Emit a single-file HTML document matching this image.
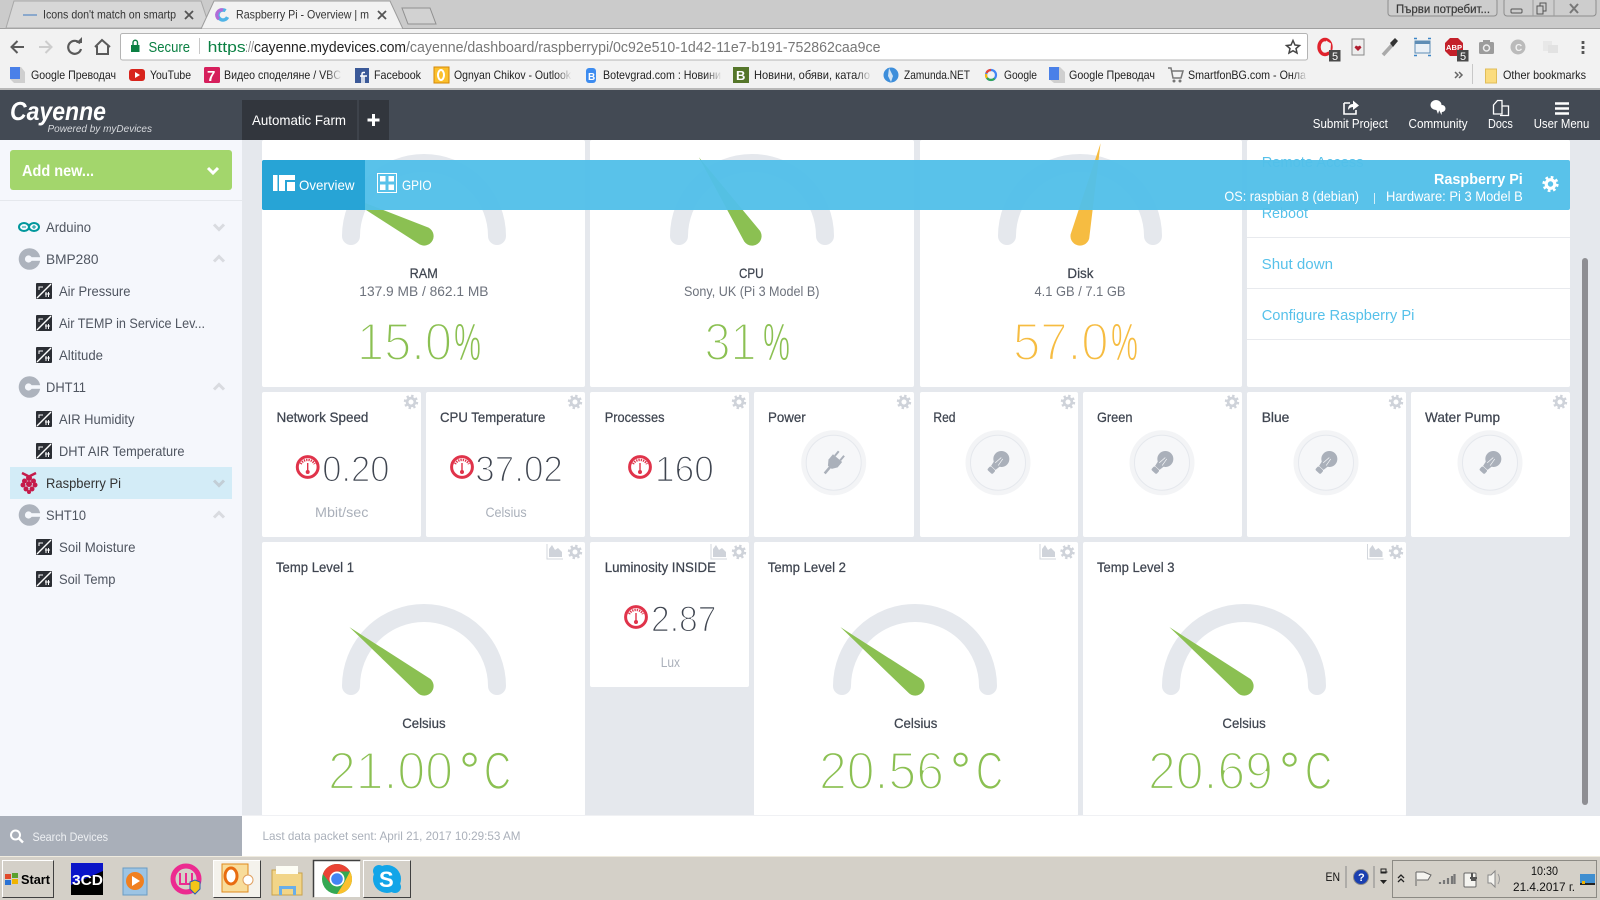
<!DOCTYPE html>
<html lang="en"><head><meta charset="utf-8"><title>Raspberry Pi - Overview | myDevices Cayenne</title>
<style>
html,body{margin:0;padding:0;width:1600px;height:900px;overflow:hidden;background:#e5e8ed}
svg{display:block;font-family:"Liberation Sans",sans-serif}
text{white-space:pre}
.t{font-size:12px;fill:#333}
.b{font-size:12px;fill:#222}
.s{font-size:14px;fill:#4f5560}
.ti{font-size:14px;fill:#3f4550;stroke:#3f4550;stroke-width:.25}
.sub{font-size:14px;fill:#6d727c}
.big{font-size:53px;stroke:#fff;stroke-width:2.2}
.pc{font-size:53px;stroke:#fff;stroke-width:.9}
.deg{font-size:53px;stroke:#fff;stroke-width:.6}
.cc{font-size:53px;stroke:#fff;stroke-width:1.7}
.mid{font-size:36px;fill:#3f4550;stroke:#fff;stroke-width:1.5}
.un{font-size:14px;fill:#aab0ba}
.lnk{font-size:15px;fill:#56c1ea}
.h{font-size:12.5px;fill:#fff}
.w{fill:#fff}
.tb{font-size:12px;fill:#111}
</style></head><body>
<svg width="1600" height="900" viewBox="0 0 1600 900" xmlns="http://www.w3.org/2000/svg">
<defs>
<linearGradient id="fade" x1="0" x2="1" y1="0" y2="0"><stop offset="0" stop-color="#f2f2f2" stop-opacity="0"/><stop offset="1" stop-color="#f2f2f2"/></linearGradient>
<g id="c"><circle r="10.8" fill="#adb3bd"/><circle cx="-1" r="3.6" fill="#f5f7fc"/><rect x="-1" y="-1.800" width="12.500" height="3.600" fill="#f5f7fc"/></g>
<g id="ch"><rect width="16" height="16" rx="1" fill="#2b2e34"/><path d="M1 15L15 1" stroke="#fff" stroke-width="1.4"/><path d="M3 7V4H7M9 11L14 11M10 9L10 14M12.5 9L12.5 14" stroke="#fff" stroke-width="1" fill="none"/></g>
<path id="dn" d="M-5-2.5L0 2.5 5-2.5" fill="none" stroke="#d9dbe0" stroke-width="3"/>
<path id="up" d="M-5 2.5L0-2.5 5 2.5" fill="none" stroke="#d9dbe0" stroke-width="3"/>
<g id="gear"><circle r="3.9" fill="none" stroke="#cfd3da" stroke-width="2.8"/><circle r="5.9" fill="none" stroke="#cfd3da" stroke-width="2.6" stroke-dasharray="2.3 2.33"/></g>
<g id="area"><path d="M-8-8V7H8" fill="none" stroke="#d3d7dd" stroke-width="1"/><path d="M-6 5V-3L-3-7 0-2 3-4 7 0V5Z" fill="#cfd3da"/></g>
<g id="arc"><path d="M-73 0A73 73 0 0 1 73 0" fill="none" stroke="#e5e8ed" stroke-width="18" stroke-linecap="round"/></g>
<path id="nd" d="M0-95L9.3-1.8A9.5 9.5 0 1 1-9.3-1.8Z"/>
<g id="m"><circle r="10.4" fill="#fff" stroke="#e0334a" stroke-width="3"/><path d="M-7-3A8 8 0 0 1 7-3" fill="none" stroke="#e0334a" stroke-width="2.4" stroke-dasharray="1.3 1"/><path d="M0-4V4" stroke="#e0334a" stroke-width="1.4"/><circle cy="5" r="2" fill="#e0334a"/></g>
<g id="tg"><circle r="32.5" fill="#f3f4f6"/><circle r="27.5" fill="#f6f7f9" stroke="#e5e8ed" stroke-width="1"/></g>
<g id="bulb"><g transform="rotate(42)"><circle cy="-5" r="8" fill="#aab0ba"/><path d="M-4 1H4L3 7H-3Z" fill="#aab0ba"/><rect x="-3.5" y="7.5" width="7" height="5" rx="1.5" fill="#aab0ba"/><path d="M-2 2L-1-6M2 2L1-6" stroke="#f6f7f9" stroke-width=".7"/></g></g>
</defs>

<!-- Browser tab strip -->
<g id="browser-tabs">
<rect width="1600" height="29" fill="#cbcbcb"/>
<rect y="28" width="1600" height="1" fill="#a0a0a0"/>
<path d="M6 28L14 1H201L210 28Z" fill="#d7d7d7" stroke="#a8a8a8"/>
<path d="M201 29L214 1H390L403 29Z" fill="#f2f2f2" stroke="#9c9c9c"/>
<rect x="23" y="14" width="14" height="2" fill="#8aa8cc"/>
<text x="43" y="18.500" class="t" textLength="133" lengthAdjust="spacingAndGlyphs">Icons don't match on smartp</text>
<path d="M185 11L193 19M193 11L185 19" stroke="#555" stroke-width="1.8"/>
<circle cx="223" cy="15" r="5" fill="none" stroke="#50b4e6" stroke-width="3.4" stroke-dasharray="24 7.4" transform="rotate(25 223 15)"/>
<path d="M223 10A5 5 0 0 0 219 19" fill="none" stroke="#b06cd8" stroke-width="3.4"/>
<text x="236" y="18.500" class="t" textLength="133" lengthAdjust="spacingAndGlyphs">Raspberry Pi - Overview | m</text>
<path d="M378 11L386 19M386 11L378 19" stroke="#555" stroke-width="1.8"/>
<path d="M402 8H430L436 24H408Z" fill="#d2d2d2" stroke="#909090"/>
<rect x="1388" y="-2" width="109" height="18" rx="3" fill="#cdcdcd" stroke="#8d8d8d"/>
<text x="1396" y="13" class="t" style="stroke:#555;stroke-width:.3" textLength="94" lengthAdjust="spacingAndGlyphs">Първи потребит...</text>
<rect x="1504" y="-2" width="92" height="18" rx="3" fill="#cdcdcd" stroke="#8d8d8d"/>
<path d="M1533-2V16M1554-2V16" stroke="#9a9a9a"/>
<rect x="1511" y="9" width="11" height="4" rx="1" fill="none" stroke="#555"/>
<path d="M1537 6H1543V14H1537ZM1540 6V3H1546V11H1543" fill="none" stroke="#555"/>
<path d="M1570 4L1578 13M1578 4L1570 13" stroke="#777" stroke-width="2"/>
</g>

<!-- Toolbar -->
<g id="toolbar">
<rect y="29" width="1600" height="59" fill="#f2f2f2"/>
<rect y="88" width="1600" height="2" fill="#b8b8b8"/>
<path d="M24 47H12M17.5 41L11.5 47 17.5 53" fill="none" stroke="#5a5a5a" stroke-width="2"/>
<path d="M39 47H51M45.500 41L51.500 47 45.500 53" fill="none" stroke="#cdcdcd" stroke-width="2"/>
<path d="M80 43.500A6.500 6.500 0 1 0 81 49" fill="none" stroke="#5a5a5a" stroke-width="2.200"/><path d="M76 43H82V37Z" fill="#5a5a5a"/>
<path d="M95 47L102 40 110 47M97 46V54H108V46" fill="none" stroke="#5a5a5a" stroke-width="2"/>
<rect x="120.500" y="33.500" width="1187" height="26.500" rx="2" fill="#fff" stroke="#b4b4b4"/>
<rect x="131" y="45" width="8.500" height="7" fill="#0b8043"/><path d="M133 45V42.500A2.200 2.200 0 0 1 137.500 42.500V45" fill="none" stroke="#0b8043" stroke-width="1.400"/>
<text x="148.500" y="52" style="font-size:14.500px;fill:#0b8043" textLength="41.500" lengthAdjust="spacingAndGlyphs">Secure</text>
<rect x="199" y="38" width="1" height="16" fill="#c8c8c8"/>
<text x="207.700" y="52" style="font-size:14.500px;fill:#0b8043" textLength="38" lengthAdjust="spacingAndGlyphs">https</text>
<text x="245" y="52" style="font-size:14.500px;fill:#888" textLength="9" lengthAdjust="spacingAndGlyphs">://</text>
<text x="254" y="52" style="font-size:14.500px;fill:#222" textLength="152" lengthAdjust="spacingAndGlyphs">cayenne.mydevices.com</text>
<text x="406" y="52" style="font-size:14.500px;fill:#777" textLength="474.500" lengthAdjust="spacingAndGlyphs">/cayenne/dashboard/raspberrypi/0c92e510-1d42-11e7-b191-752862caa9ce</text>
<path d="M1293 40.500L1295 45 1299.500 45.500 1296 48.500 1297 53 1293 50.700 1289 53 1290 48.500 1286.500 45.500 1291 45Z" fill="none" stroke="#444" stroke-width="1.500"/>

<!-- Extensions -->
<ellipse cx="1325" cy="47" rx="6" ry="7.500" fill="none" stroke="#e0222c" stroke-width="3.400"/><path d="M1326 40.500L1331 43.500 1330.500 51 1327 52Z" fill="#f2f2f2"/>
<rect x="1329" y="50" width="11.500" height="11.500" fill="#4a4a4a"/><text x="1332" y="60" style="font-size:11px;fill:#fff">5</text>
<rect x="1352" y="39" width="12" height="16" fill="#eee" stroke="#8a8a8a"/><path d="M1358 51L1354.500 47.500 1356 45.500 1358 46.500 1360 45.500 1361.500 47.500Z" fill="#b01c2e"/>
<path d="M1383 55L1393 44" stroke="#aaa" stroke-width="3.600"/><path d="M1390 43L1395 38 1398 41 1393 47Z" fill="#333"/>
<rect x="1415" y="41" width="15" height="12" fill="#eaf0f6" stroke="#5e8db5"/><rect x="1415" y="41" width="15" height="3" fill="#5e8db5"/>
<path d="M1414 38.500H1417M1428 38.500H1431M1414 55.500H1417M1428 55.500H1431" stroke="#3d85c6" stroke-width="1.500"/>
<path d="M1450 38H1458L1463 43V51L1458 56H1450L1445 51V43Z" fill="#c4202a"/><text x="1446" y="50" style="font-size:7.500px;fill:#fff;font-weight:bold" textLength="16" lengthAdjust="spacingAndGlyphs">ABP</text>
<rect x="1457" y="50" width="11.500" height="11.500" fill="#4a4a4a"/><text x="1460" y="60" style="font-size:11px;fill:#fff">5</text>
<rect x="1479" y="42" width="15" height="12" rx="1.500" fill="#9c9c9c"/><rect x="1483" y="40" width="7" height="3" fill="#9c9c9c"/><circle cx="1486.500" cy="48" r="3" fill="none" stroke="#eee" stroke-width="1.500"/>
<circle cx="1518" cy="47" r="7.500" fill="#bbb"/><text x="1515" y="51" style="font-size:10px;fill:#f2f2f2;font-weight:bold">C</text>
<rect x="1543" y="41" width="9" height="10" fill="#e8e8e8"/><rect x="1548" y="45" width="10" height="8" fill="#e2e2e2"/>
<path d="M1583 41v3M1583 46v3M1583 51v3" stroke="#555" stroke-width="2.800"/>

<!-- Bookmarks -->
<path d="M10 67H21L25 72V83H14L10 79Z" fill="#cfcfcf"/><rect x="10" y="67" width="10" height="12" fill="#4a80e8"/>
<text x="31" y="79" class="b" textLength="85" lengthAdjust="spacingAndGlyphs">Google Преводач</text>
<rect x="129" y="69" width="16" height="12" rx="3" fill="#d8241c"/><path d="M135 72V78L140 75Z" fill="#fff"/>
<text x="150" y="79" class="b" textLength="41" lengthAdjust="spacingAndGlyphs">YouTube</text>
<rect x="204" y="67" width="16" height="16" rx="1.500" fill="#d61f5c"/><text x="207" y="81" style="font-size:15px;font-weight:bold;fill:#fff">7</text>
<text x="224" y="79" class="b" textLength="117" lengthAdjust="spacingAndGlyphs">Видео споделяне / VBC</text>
<rect x="355" y="68" width="14" height="15" fill="#3b5998"/><path d="M364 83V76H367M365 72.500H363.500Q362 72.500 362 74V83M360 76H364" fill="none" stroke="#fff" stroke-width="1.500"/>
<text x="374" y="79" class="b" textLength="47" lengthAdjust="spacingAndGlyphs">Facebook</text>
<rect x="434" y="67" width="15" height="16" fill="#fbc02d" stroke="#d48806"/><ellipse cx="441" cy="75" rx="3" ry="5" fill="none" stroke="#fff" stroke-width="2"/>
<text x="454" y="79" class="b" textLength="117" lengthAdjust="spacingAndGlyphs">Ognyan Chikov - Outlook</text>
<rect x="586" y="68" width="10" height="15" rx="3" fill="#3d8cf0"/><text x="588" y="80" style="font-size:10px;fill:#fff;font-weight:bold">B</text>
<text x="603" y="79" class="b" textLength="118" lengthAdjust="spacingAndGlyphs">Botevgrad.com : Новини</text>
<rect x="733" y="67" width="16" height="16" fill="#55762a"/><text x="736" y="80" style="font-size:13px;fill:#fff;font-weight:bold">B</text>
<text x="754" y="79" class="b" textLength="116" lengthAdjust="spacingAndGlyphs">Новини, обяви, катало</text>
<circle cx="891" cy="75" r="7.500" fill="#3d8edb"/><path d="M889 68L893 76 891 82 888 76Z" fill="#cfe3f5"/>
<text x="904" y="79" class="b" textLength="66" lengthAdjust="spacingAndGlyphs">Zamunda.NET</text>
<circle cx="991" cy="75" r="5" fill="none" stroke="#4285f4" stroke-width="2.200"/><path d="M991 70A5 5 0 0 0 986.500 73" fill="none" stroke="#ea4335" stroke-width="2.200"/><path d="M986.200 74A5 5 0 0 0 987 78" fill="none" stroke="#fbbc05" stroke-width="2.200"/><path d="M987 78A5 5 0 0 0 994.500 78.500" fill="none" stroke="#34a853" stroke-width="2.200"/>
<text x="1004" y="79" class="b" textLength="33" lengthAdjust="spacingAndGlyphs">Google</text>
<path d="M1049 67H1060L1065 72V83H1054L1049 79Z" fill="#cfcfcf"/><rect x="1049" y="67" width="10" height="13" fill="#4a80e8"/>
<text x="1069" y="79" class="b" textLength="86" lengthAdjust="spacingAndGlyphs">Google Преводач</text>
<path d="M1168 68H1171L1173 78H1181L1183 71H1172" fill="none" stroke="#777" stroke-width="1.500"/><circle cx="1174" cy="81" r="1.500" fill="#777"/><circle cx="1180" cy="81" r="1.500" fill="#777"/>
<text x="1188" y="79" class="b" textLength="118" lengthAdjust="spacingAndGlyphs">SmartfonBG.com - Онла</text>
<rect x="326" y="63" width="16" height="22" fill="url(#fade)"/><rect x="556" y="63" width="16" height="22" fill="url(#fade)"/><rect x="706" y="63" width="16" height="22" fill="url(#fade)"/><rect x="856" y="63" width="16" height="22" fill="url(#fade)"/><rect x="1292" y="63" width="16" height="22" fill="url(#fade)"/>
<path d="M1455 72L1458 75 1455 78M1459 72L1462 75 1459 78" fill="none" stroke="#666" stroke-width="1.500"/>
<rect x="1472" y="64" width="1" height="20" fill="#c8c8c8"/>
<rect x="1485.500" y="69" width="11" height="14" fill="#fbdc7e" stroke="#e0bd5a"/>
<text x="1503" y="79" class="b" textLength="83" lengthAdjust="spacingAndGlyphs">Other bookmarks</text>
</g>

<!-- App background -->
<rect y="140" width="1600" height="716" fill="#e5e8ed"/>

<!-- Main cards -->
<g id="cards">
<g fill="#fff">
<rect x="262" y="140" width="323" height="247" rx="2"/>
<rect x="590" y="140" width="324" height="247" rx="2"/>
<rect x="920" y="140" width="322" height="247" rx="2"/>
<rect x="1247" y="140" width="323" height="247" rx="2"/>
<rect x="262" y="392" width="159" height="145" rx="2"/>
<rect x="426" y="392" width="159" height="145" rx="2"/>
<rect x="590" y="392" width="159" height="145" rx="2"/>
<rect x="754" y="392" width="160" height="145" rx="2"/>
<rect x="920" y="392" width="158" height="145" rx="2"/>
<rect x="1083" y="392" width="159" height="145" rx="2"/>
<rect x="1247" y="392" width="159" height="145" rx="2"/>
<rect x="1411" y="392" width="159" height="145" rx="2"/>
<rect x="262" y="542" width="323" height="274" rx="2"/>
<rect x="590" y="542" width="159" height="145" rx="2"/>
<rect x="754" y="542" width="324" height="274" rx="2"/>
<rect x="1083" y="542" width="323" height="274" rx="2"/>
</g>

<!-- RAM -->
<use href="#arc" x="424" y="236"/><use href="#nd" transform="translate(424 236) rotate(-63)" fill="#8bc052"/>
<text x="409.600" y="278" class="ti" textLength="28.200" lengthAdjust="spacingAndGlyphs">RAM</text>
<text x="359.300" y="296" class="sub" textLength="129.200" lengthAdjust="spacingAndGlyphs">137.9 MB / 862.1 MB</text>
<text x="357" y="360" class="big" fill="#8bc052" textLength="95" lengthAdjust="spacingAndGlyphs">15.0</text>
<text x="454" y="360" class="pc" fill="#8bc052" textLength="27" lengthAdjust="spacingAndGlyphs">%</text>
<!-- CPU -->
<use href="#arc" x="752" y="236"/><use href="#nd" transform="translate(752 236) rotate(-34)" fill="#8bc052"/>
<text x="739" y="278" class="ti" textLength="24.500" lengthAdjust="spacingAndGlyphs">CPU</text>
<text x="684" y="296" class="sub" textLength="135.400" lengthAdjust="spacingAndGlyphs">Sony, UK (Pi 3 Model B)</text>
<text x="704.500" y="360" class="big" fill="#8bc052" textLength="52" lengthAdjust="spacingAndGlyphs">31</text>
<text x="763" y="360" class="pc" fill="#8bc052" textLength="27" lengthAdjust="spacingAndGlyphs">%</text>
<!-- Disk -->
<use href="#arc" x="1080" y="236"/><use href="#nd" transform="translate(1080 236) rotate(12.500)" fill="#f6bc41"/>
<text x="1067.400" y="278" class="ti" textLength="26.100" lengthAdjust="spacingAndGlyphs">Disk</text>
<text x="1034.500" y="296" class="sub" textLength="91" lengthAdjust="spacingAndGlyphs">4.1 GB / 7.1 GB</text>
<text x="1013" y="360" class="big" fill="#f6bc41" textLength="95.500" lengthAdjust="spacingAndGlyphs">57.0</text>
<text x="1111" y="360" class="pc" fill="#f6bc41" textLength="27" lengthAdjust="spacingAndGlyphs">%</text>
<!-- Actions -->
<text x="1261.700" y="167" class="lnk" textLength="101.900" lengthAdjust="spacingAndGlyphs">Remote Access</text>
<text x="1261.700" y="218" class="lnk" textLength="46.300" lengthAdjust="spacingAndGlyphs">Reboot</text>
<text x="1261.700" y="269" class="lnk" textLength="71.300" lengthAdjust="spacingAndGlyphs">Shut down</text>
<text x="1261.700" y="320" class="lnk" textLength="152.700" lengthAdjust="spacingAndGlyphs">Configure Raspberry Pi</text>
<path d="M1247 237.500H1570M1247 288.500H1570M1247 339.500H1570" stroke="#e8eaee"/>

<!-- Small cards -->
<text x="276.500" y="422" class="ti" textLength="91.900" lengthAdjust="spacingAndGlyphs">Network Speed</text>
<text x="440" y="422" class="ti" textLength="105.300" lengthAdjust="spacingAndGlyphs">CPU Temperature</text>
<text x="604.700" y="422" class="ti" textLength="59.800" lengthAdjust="spacingAndGlyphs">Processes</text>
<text x="768" y="422" class="ti" textLength="37.700" lengthAdjust="spacingAndGlyphs">Power</text>
<text x="933.400" y="422" class="ti" textLength="22.100" lengthAdjust="spacingAndGlyphs">Red</text>
<text x="1097" y="422" class="ti" textLength="35.500" lengthAdjust="spacingAndGlyphs">Green</text>
<text x="1261.700" y="422" class="ti" textLength="27.700" lengthAdjust="spacingAndGlyphs">Blue</text>
<text x="1425" y="422" class="ti" textLength="75" lengthAdjust="spacingAndGlyphs">Water Pump</text>
<use href="#gear" x="411" y="402"/><use href="#gear" x="575" y="402"/><use href="#gear" x="739" y="402"/><use href="#gear" x="904" y="402"/><use href="#gear" x="1068" y="402"/><use href="#gear" x="1232" y="402"/><use href="#gear" x="1396" y="402"/><use href="#gear" x="1560" y="402"/>
<use href="#m" x="307.700" y="467"/><text x="322.200" y="481.700" class="mid" textLength="67.300" lengthAdjust="spacingAndGlyphs">0.20</text>
<use href="#m" x="462" y="467"/><text x="475.300" y="481.700" class="mid" textLength="87.600" lengthAdjust="spacingAndGlyphs">37.02</text>
<use href="#m" x="640" y="467"/><text x="655" y="481.700" class="mid" textLength="58.800" lengthAdjust="spacingAndGlyphs">160</text>
<text x="315" y="517" class="un" textLength="53.400" lengthAdjust="spacingAndGlyphs">Mbit/sec</text>
<text x="485.500" y="517" class="un" textLength="41.100" lengthAdjust="spacingAndGlyphs">Celsius</text>
<use href="#tg" x="833.700" y="462.700"/>
<g transform="translate(833.700 462.700) rotate(40)" fill="#aab0ba"><path d="M-6-6H6V1L2.500 6H-2.500L-6 1Z"/><rect x="-1.300" y="5" width="2.600" height="9"/><path d="M-3.500-6V-12M3.500-6V-12" stroke="#aab0ba" stroke-width="2"/></g>
<use href="#tg" x="998" y="462.700"/><use href="#bulb" x="998" y="462.700"/>
<use href="#tg" x="1162" y="462.700"/><use href="#bulb" x="1162" y="462.700"/>
<use href="#tg" x="1326" y="462.700"/><use href="#bulb" x="1326" y="462.700"/>
<use href="#tg" x="1490" y="462.700"/><use href="#bulb" x="1490" y="462.700"/>

<!-- Bottom row -->
<text x="276" y="572" class="ti" textLength="78" lengthAdjust="spacingAndGlyphs">Temp Level 1</text>
<text x="604.700" y="572" class="ti" textLength="111.300" lengthAdjust="spacingAndGlyphs">Luminosity INSIDE</text>
<text x="767.800" y="572" class="ti" textLength="78.200" lengthAdjust="spacingAndGlyphs">Temp Level 2</text>
<text x="1097" y="572" class="ti" textLength="77.500" lengthAdjust="spacingAndGlyphs">Temp Level 3</text>
<use href="#area" x="555" y="552"/><use href="#gear" x="575" y="552"/>
<use href="#area" x="719" y="552"/><use href="#gear" x="739" y="552"/>
<use href="#area" x="1048" y="552"/><use href="#gear" x="1067.500" y="552"/>
<use href="#area" x="1375.500" y="552"/><use href="#gear" x="1396" y="552"/>
<use href="#m" x="636" y="617"/><text x="651" y="631.700" class="mid" textLength="65.500" lengthAdjust="spacingAndGlyphs">2.87</text>
<text x="660.700" y="667" class="un" textLength="19.300" lengthAdjust="spacingAndGlyphs">Lux</text>

<use href="#arc" x="424" y="686"/><use href="#nd" transform="translate(424 686) rotate(-51.700)" fill="#8bc052"/>
<text x="402.200" y="728" class="ti" textLength="43.400" lengthAdjust="spacingAndGlyphs">Celsius</text>
<text x="328" y="789" class="big" fill="#8bc052" textLength="125" lengthAdjust="spacingAndGlyphs">21.00</text>
<text x="459" y="789" class="deg" fill="#8bc052">°</text>
<text x="484" y="789" class="cc" fill="#8bc052" textLength="27" lengthAdjust="spacingAndGlyphs">C</text>
<use href="#arc" x="915" y="686"/><use href="#nd" transform="translate(915 686) rotate(-51.700)" fill="#8bc052"/>
<text x="894" y="728" class="ti" textLength="43.400" lengthAdjust="spacingAndGlyphs">Celsius</text>
<text x="819" y="789" class="big" fill="#8bc052" textLength="125" lengthAdjust="spacingAndGlyphs">20.56</text>
<text x="950" y="789" class="deg" fill="#8bc052">°</text>
<text x="976" y="789" class="cc" fill="#8bc052" textLength="27" lengthAdjust="spacingAndGlyphs">C</text>
<use href="#arc" x="1244" y="686"/><use href="#nd" transform="translate(1244 686) rotate(-51.700)" fill="#8bc052"/>
<text x="1222.400" y="728" class="ti" textLength="43.400" lengthAdjust="spacingAndGlyphs">Celsius</text>
<text x="1148" y="789" class="big" fill="#8bc052" textLength="125" lengthAdjust="spacingAndGlyphs">20.69</text>
<text x="1279" y="789" class="deg" fill="#8bc052">°</text>
<text x="1305" y="789" class="cc" fill="#8bc052" textLength="27" lengthAdjust="spacingAndGlyphs">C</text>
</g>

<!-- Scrollbar -->
<rect x="1582" y="258" width="6" height="547" rx="3" fill="#8e8e93"/>

<!-- Device bar -->
<g id="device-bar">
<rect x="262" y="160" width="1308" height="50" rx="2" fill="#52bfe9" fill-opacity=".96"/>
<path d="M264 160H365V210H264Q262 210 262 208V162Q262 160 264 160Z" fill="#27a4d6"/>
<path d="M273 175H295V180H285V191H279V175ZM273 175H277.500V191H273ZM287 182H295V191H287Z" fill="#fff"/>
<text x="299" y="190" class="w" style="font-size:14px" textLength="55.500" lengthAdjust="spacingAndGlyphs">Overview</text>
<rect x="377.500" y="173.500" width="19" height="19" fill="none" stroke="#fff"/>
<path d="M380 176H385.500V181.500H380ZM388.500 176H394V181.500H388.500ZM380 184.500H385.500V190H380ZM388.500 184.500H394V190H388.500Z" fill="#fff"/>
<text x="402" y="190" class="w" style="font-size:14px" textLength="29.500" lengthAdjust="spacingAndGlyphs">GPIO</text>
<text x="1434" y="184" class="w" style="font-size:15px;font-weight:bold" textLength="88.800" lengthAdjust="spacingAndGlyphs">Raspberry Pi</text>
<text x="1224.400" y="201" class="w" style="font-size:14px" textLength="134.600" lengthAdjust="spacingAndGlyphs">OS: raspbian 8 (debian)</text>
<rect x="1374" y="193" width="1" height="11" fill="#d6f0fa"/>
<text x="1386" y="201" class="w" style="font-size:14px" textLength="136.800" lengthAdjust="spacingAndGlyphs">Hardware: Pi 3 Model B</text>
<g transform="translate(1550.500 184)"><circle r="4.300" fill="none" stroke="#fff" stroke-width="3.200"/><circle r="6.800" fill="none" stroke="#fff" stroke-width="2.600" stroke-dasharray="2.670 2.670"/></g>
</g>

<!-- App header -->
<g id="app-header">
<rect y="90" width="1600" height="50" fill="#434a54"/>
<text x="10" y="120" style="font-size:26px;font-style:italic;font-weight:bold;fill:#fff" textLength="96" lengthAdjust="spacingAndGlyphs">Cayenne</text>
<text x="47.500" y="132" style="font-size:10.500px;font-style:italic;fill:#d8dade" textLength="104.500" lengthAdjust="spacingAndGlyphs">Powered by myDevices</text>
<rect x="242" y="100" width="147" height="40" fill="#32363d"/>
<rect x="357.500" y="100" width="1" height="40" fill="#4b5059"/>
<text x="252" y="125" style="font-size:14px;fill:#fff" textLength="94" lengthAdjust="spacingAndGlyphs">Automatic Farm</text>
<path d="M373.500 114V126M367.500 120H379.500" stroke="#fff" stroke-width="3"/>
<path d="M1344 103H1350M1344 103V114H1356V110" fill="none" stroke="#fff" stroke-width="1.600"/><path d="M1348 110Q1348 104 1353 104V100.500L1359 105.500 1353 110V107Q1350 107 1348 110Z" fill="#fff"/>
<text x="1312.800" y="128" class="h" textLength="75" lengthAdjust="spacingAndGlyphs">Submit Project</text>
<ellipse cx="1436" cy="105" rx="5.500" ry="5" fill="#fff"/><path d="M1436 109L1438 114 1440 108Z" fill="#fff"/><circle cx="1442" cy="108.500" r="3.500" fill="#fff"/><path d="M1442 111L1441.500 115 1439.500 111Z" fill="#fff"/>
<text x="1408.500" y="128" class="h" textLength="59.100" lengthAdjust="spacingAndGlyphs">Community</text>
<path d="M1493.500 105L1497.500 100.500H1502V114H1493.500ZM1502 106H1508.500V115.500H1500" fill="none" stroke="#fff" stroke-width="1.300"/>
<text x="1488" y="128" class="h" textLength="24.800" lengthAdjust="spacingAndGlyphs">Docs</text>
<path d="M1555 103.500H1569M1555 108.500H1569M1555 113.500H1569" stroke="#fff" stroke-width="2.400"/>
<text x="1533.700" y="128" class="h" textLength="55.600" lengthAdjust="spacingAndGlyphs">User Menu</text>
</g>

<!-- Sidebar -->
<g id="sidebar">
<rect y="140" width="242" height="676" fill="#f5f7fc"/>
<rect x="10" y="150" width="222" height="40" rx="3" fill="#a3d66c"/>
<text x="22" y="176" style="font-size:16px;font-weight:bold;fill:#fff" textLength="72" lengthAdjust="spacingAndGlyphs">Add new...</text>
<path d="M208 168L213 173 218 168" fill="none" stroke="#fff" stroke-width="3"/>
<rect y="200" width="242" height="1" fill="#e5e8ed"/>
<rect x="10" y="467" width="222" height="32" fill="#d3ecf7"/>
<g fill="none" stroke="#00979c" stroke-width="2"><ellipse cx="24" cy="227" rx="5" ry="4"/><ellipse cx="34" cy="227" rx="5" ry="4"/></g><path d="M22 227H26M32 227H36M34 225V229" stroke="#00979c" stroke-width="1"/>
<text x="46" y="232" class="s" textLength="45" lengthAdjust="spacingAndGlyphs">Arduino</text><use href="#dn" x="219" y="227"/>
<use href="#c" x="29.500" y="259"/><text x="46" y="264" class="s" textLength="52.500" lengthAdjust="spacingAndGlyphs">BMP280</text><use href="#up" x="219" y="259"/>
<use href="#ch" x="36" y="283"/><text x="59" y="296" class="s" textLength="71.500" lengthAdjust="spacingAndGlyphs">Air Pressure</text>
<use href="#ch" x="36" y="315"/><text x="59" y="328" class="s" textLength="146" lengthAdjust="spacingAndGlyphs">Air TEMP in Service Lev...</text>
<use href="#ch" x="36" y="347"/><text x="59" y="360" class="s" textLength="44" lengthAdjust="spacingAndGlyphs">Altitude</text>
<use href="#c" x="29.500" y="387"/><text x="46" y="392" class="s" textLength="40" lengthAdjust="spacingAndGlyphs">DHT11</text><use href="#up" x="219" y="387"/>
<use href="#ch" x="36" y="411"/><text x="59" y="424" class="s" textLength="75.500" lengthAdjust="spacingAndGlyphs">AIR Humidity</text>
<use href="#ch" x="36" y="443"/><text x="59" y="456" class="s" textLength="125.500" lengthAdjust="spacingAndGlyphs">DHT AIR Temperature</text>
<g fill="#c51a4a"><circle cx="29" cy="478" r="3"/><circle cx="24.500" cy="481" r="2.500"/><circle cx="33.500" cy="481" r="2.500"/><circle cx="23" cy="485" r="2.500"/><circle cx="35" cy="485" r="2.500"/><circle cx="29" cy="484" r="3"/><circle cx="26" cy="489" r="2.500"/><circle cx="32" cy="489" r="2.500"/><circle cx="29" cy="492" r="2"/></g>
<path d="M22 473L28 476M36 473L30 476" stroke="#c51a4a" stroke-width="2.400"/>
<text x="46" y="488" class="s" style="fill:#333" textLength="75" lengthAdjust="spacingAndGlyphs">Raspberry Pi</text><path d="M214 480.500L219 485.500 224 480.500" fill="none" stroke="#c2ced6" stroke-width="3"/>
<use href="#c" x="29.500" y="515"/><text x="46" y="520" class="s" textLength="40" lengthAdjust="spacingAndGlyphs">SHT10</text><use href="#up" x="219" y="515"/>
<use href="#ch" x="36" y="539"/><text x="59" y="552" class="s" textLength="76.500" lengthAdjust="spacingAndGlyphs">Soil Moisture</text>
<use href="#ch" x="36" y="571"/><text x="59" y="584" class="s" textLength="56.500" lengthAdjust="spacingAndGlyphs">Soil Temp</text>
<rect y="816" width="242" height="40" fill="#a9afb9"/>
<circle cx="15.500" cy="835" r="4.500" fill="none" stroke="#fff" stroke-width="2"/><path d="M19 838.500L23 842.500" stroke="#fff" stroke-width="2.400"/>
<text x="32.500" y="841" style="font-size:12px;fill:#eef0f3" textLength="75.500" lengthAdjust="spacingAndGlyphs">Search Devices</text>
</g>

<!-- Footer -->
<rect x="242" y="816" width="1358" height="40" fill="#fff"/>
<rect x="242" y="815" width="1164" height="1" fill="#f0f1f4"/>
<text x="262.500" y="840" style="font-size:12px;fill:#aab0ba" textLength="258" lengthAdjust="spacingAndGlyphs">Last data packet sent: April 21, 2017 10:29:53 AM</text>

<!-- Windows taskbar -->
<g id="taskbar">
<rect y="856" width="1600" height="44" fill="#d4d0c8"/>
<rect y="856" width="1600" height="1" fill="#efebdf"/>
<g fill="#d4d0c8"><rect x="2.500" y="860.500" width="51" height="37"/></g><path d="M2.500 897.500V860.500H53.500" fill="none" stroke="#fff"/><path d="M2.500 897.500H53.500V860.500" fill="none" stroke="#404040"/>
<g><rect x="5" y="874" width="6" height="5" fill="#e04a2a"/><rect x="12" y="873" width="6" height="5" fill="#5aa02c"/><rect x="5" y="880" width="6" height="5" fill="#2a72d4"/><rect x="12" y="879" width="6" height="5" fill="#f0b400"/></g>
<text x="21" y="884" style="font-size:13px;font-weight:bold;fill:#000" textLength="29" lengthAdjust="spacingAndGlyphs">Start</text>
<rect x="71" y="863" width="32" height="32" fill="#000"/><path d="M71 863H103V871L71 885Z" fill="#0a14c8"/><text x="72" y="885" style="font-size:15px;font-weight:bold;fill:#fff" textLength="31" lengthAdjust="spacingAndGlyphs">3CD</text>
<rect x="123" y="868" width="24" height="27" fill="#9cc4e4" stroke="#6a9cc4"/><circle cx="135" cy="881" r="9" fill="#f08020"/><path d="M132 876V886L140 881Z" fill="#fff"/>
<circle cx="186" cy="879" r="13" fill="none" stroke="#ec2a90" stroke-width="5"/><path d="M180 873V884H192V873M186 873V884" fill="none" stroke="#ec2a90" stroke-width="2"/>
<path d="M190 882L195 880 200 882V889L195 894 190 889Z" fill="#f5c518" stroke="#2a5fb0"/>
<rect x="213.500" y="860.500" width="47" height="37" fill="#f4f2ec"/><path d="M213.500 897.500V860.500H260.500" fill="none" stroke="#fff"/><path d="M213.500 897.500H260.500V860.500" fill="none" stroke="#404040"/>
<rect x="222" y="864" width="26" height="28" fill="#f8dc9a" stroke="#e08a1c"/><ellipse cx="231" cy="876" rx="6" ry="8" fill="#fff" stroke="#e86c10" stroke-width="3"/><circle cx="248" cy="880" r="5" fill="#fff" stroke="#e0a060"/>
<path d="M272 870H281L284 873H302V895H272Z" fill="#f2d588" stroke="#c9a24a"/><rect x="276" y="866" width="22" height="8" fill="#fdfdf5"/><path d="M279 886H296V895H293V889H282V895H279Z" fill="#6aaee8"/>
<rect x="313.500" y="860.500" width="47" height="37" fill="#fff"/><path d="M313.500 897.500V860.500H360.500" fill="none" stroke="#404040" stroke-width="1.500"/><path d="M313.500 897.500H360.500V860.500" fill="none" stroke="#d4d0c8"/>
<circle cx="337" cy="879" r="15" fill="#34a853"/><path d="M337 864A15 15 0 0 1 350 871.500L337 871.500 324 871.500A15 15 0 0 1 337 864Z" fill="#ea4335"/><path d="M323 874A15 15 0 0 1 324 871.500L337 871.500 330 883Z" fill="#ea4335"/><path d="M350 871.500A15 15 0 0 1 337 894L344 883Z" fill="#fbc02d"/><circle cx="337" cy="879" r="7.500" fill="#fff"/><circle cx="337" cy="879" r="5.800" fill="#4285f4"/>
<rect x="363.500" y="860.500" width="47" height="37" fill="#d4d0c8"/><path d="M363.500 897.500V860.500H410.500" fill="none" stroke="#fff"/><path d="M363.500 897.500H410.500V860.500" fill="none" stroke="#404040"/>
<circle cx="387" cy="879" r="14" fill="#12a5e8"/><circle cx="379" cy="871" r="6" fill="#12a5e8"/><circle cx="395" cy="887" r="6" fill="#12a5e8"/><text x="379" y="887" style="font-size:22px;font-weight:bold;fill:#fff">S</text>

<text x="1325.500" y="881" class="tb" textLength="14.500" lengthAdjust="spacingAndGlyphs">EN</text>
<rect x="1345.500" y="866" width="1" height="22" fill="#888"/>
<circle cx="1361" cy="877" r="7.500" fill="#1a3fb0" stroke="#888"/><text x="1358" y="881" style="font-size:11px;font-weight:bold;fill:#fff">?</text>
<rect x="1373.500" y="866" width="1" height="22" fill="#888"/>
<path d="M1380.500 872H1387.500M1381 869H1386V873H1381Z" fill="none" stroke="#222"/><path d="M1380 880H1387L1383.500 884Z" fill="#222"/>
<rect x="1392.500" y="860.500" width="204" height="37" fill="none" stroke="#8c8a84"/>
<path d="M1398 878L1401 875 1404 878M1398 882L1401 879 1404 882" fill="none" stroke="#222" stroke-width="1.300"/>
<path d="M1416 872V886M1416 872H1424L1431 875 1428 880H1417" fill="#f5f4f0" stroke="#666"/>
<path d="M1440 884V882M1444 884V880M1448 884V878M1452 884V876M1454.500 884V874" stroke="#777" stroke-width="2.200"/>
<rect x="1464" y="873" width="12" height="14" rx="1" fill="#f5f4f0" stroke="#666"/><path d="M1472 873V880H1476M1470 878H1477" stroke="#555" stroke-width="2" fill="none"/>
<path d="M1488 875H1491L1495 871V887L1491 883H1488Z" fill="#f5f4f0" stroke="#888"/><path d="M1498 874Q1501 879 1498 884" fill="none" stroke="#999"/>
<text x="1531" y="875" class="tb" textLength="27" lengthAdjust="spacingAndGlyphs">10:30</text>
<text x="1513" y="891" class="tb" textLength="62" lengthAdjust="spacingAndGlyphs">21.4.2017 г.</text>
<rect x="1580" y="874" width="15" height="11" fill="#3f8ed0"/><rect x="1580" y="883" width="15" height="2" fill="#222"/><rect x="1582" y="881" width="3" height="3" fill="#f0b400"/>
</g>
</svg>
</body></html>
